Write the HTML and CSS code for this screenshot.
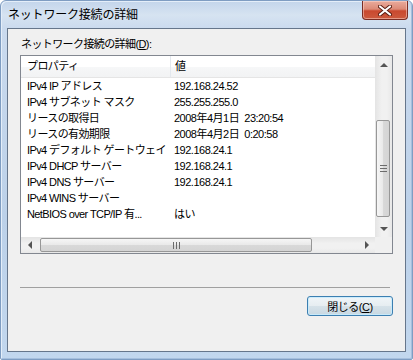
FILE: index.html
```html
<!DOCTYPE html>
<html lang="ja">
<head>
    <meta charset="UTF-8">
    <title>ネットワーク接続の詳細</title>
    <link rel="stylesheet" href="styles.css">
</head>
<body>
    <div class="window">
        <div class="titlebar">
            <span class="title">ネットワーク接続の詳細</span>
            <div class="close">
                <svg width="14" height="11" viewBox="0 0 14 11">
                    <path d="M2 1.5 L12 9.5 M12 1.5 L2 9.5" stroke="#5a1d12" stroke-width="4" stroke-linecap="round"/>
                    <path d="M2 1.5 L12 9.5 M12 1.5 L2 9.5" stroke="#fff" stroke-width="2.2" stroke-linecap="round"/>
                </svg>
            </div>
        </div>

        <div class="client">
            <div class="label">ネットワーク接続の詳細(<u>D</u>):</div>

            <div class="listbox">
                <div class="list">
                    <div class="head">
                        <div class="col-prop">プロパティ</div>
                        <div class="col-val">値</div>
                    </div>
                    <div class="row"><div class="col-prop">IPv4 IP アドレス</div><div class="col-val">192.168.24.52</div></div>
                    <div class="row"><div class="col-prop">IPv4 サブネット マスク</div><div class="col-val">255.255.255.0</div></div>
                    <div class="row"><div class="col-prop">リースの取得日</div><div class="col-val">2008年4月1日 &nbsp;23:20:54</div></div>
                    <div class="row"><div class="col-prop">リースの有効期限</div><div class="col-val">2008年4月2日 &nbsp;0:20:58</div></div>
                    <div class="row"><div class="col-prop">IPv4 デフォルト ゲートウェイ</div><div class="col-val">192.168.24.1</div></div>
                    <div class="row"><div class="col-prop">IPv4 DHCP サーバー</div><div class="col-val">192.168.24.1</div></div>
                    <div class="row"><div class="col-prop">IPv4 DNS サーバー</div><div class="col-val">192.168.24.1</div></div>
                    <div class="row"><div class="col-prop">IPv4 WINS サーバー</div><div class="col-val"></div></div>
                    <div class="row"><div class="col-prop">NetBIOS over TCP/IP 有...</div><div class="col-val">はい</div></div>
                </div>

                <div class="vscroll">
                    <div class="sbtn"><span class="arrow up"></span></div>
                    <div class="vtrack">
                        <div class="vthumb"><span class="grip-h"></span></div>
                    </div>
                    <div class="sbtn"><span class="arrow down"></span></div>
                </div>

                <div class="hscroll">
                    <div class="sbtn"><span class="arrow left"></span></div>
                    <div class="htrack">
                        <div class="hthumb"><span class="grip-v"></span></div>
                    </div>
                    <div class="sbtn"><span class="arrow right"></span></div>
                </div>
                <div class="corner"></div>
            </div>

            <div class="separator"></div>

            <div class="buttons">
                <button class="btn">閉じる(<u>C</u>)</button>
            </div>
        </div>
    </div>
</body>
</html>
```

FILE: styles.css
```css
body {
    margin: 0;
    width: 413px;
    height: 360px;
    overflow: hidden;
    font-family: "Liberation Sans", "Noto Sans CJK JP", sans-serif;
    font-size: 11px;
    color: #000;
    background: #fff;
}
.window {
    box-sizing: border-box;
    width: 413px;
    height: 360px;
    border: 1px solid #7f9dc2;
    border-radius: 6px 6px 2px 2px;
    padding: 0 6px 7px 6px;
    background: linear-gradient(to bottom, #c3d5eb 0, #d6e3f1 14px, #cadaee 28px, #bcd1e9 60%, #c2d7ee 100%);
    box-shadow: inset 1px 1px 0 #e4eef9, inset -1px -1px 0 #a6bfdd;
}
.titlebar {
    height: 27px;
    display: flex;
    justify-content: space-between;
    align-items: flex-start;
}
.title {
    font-size: 12px;
    line-height: 28px;
    padding-left: 1px;
    letter-spacing: -0.2px;
}
.close {
    width: 44px;
    height: 18px;
    margin-right: -2px;
    border: 1px solid #7a2d24;
    border-top: none;
    border-radius: 0 0 4px 4px;
    background: linear-gradient(to bottom, #e9ab9c 0, #dc8a77 45%, #c9492f 55%, #cc5a3e 100%);
    box-shadow: inset 0 0 0 1px rgba(255, 220, 210, 0.5);
    display: flex;
    align-items: center;
    justify-content: center;
}
.client {
    box-sizing: border-box;
    height: 324px;
    border: 1px solid #66768b;
    background: #f0f0f0;
    padding: 7px 12px 0 12px;
}
.label {
    line-height: 16px;
    padding-left: 1px;
    margin-bottom: 3px;
    letter-spacing: -0.6px;
}
.listbox {
    width: 373px;
    height: 199px;
    box-sizing: border-box;
    border: 1px solid #828790;
    background: #fff;
    display: grid;
    grid-template-columns: 354px 17px;
    grid-template-rows: 181px 16px;
}
.list {
    overflow: hidden;
}
.head {
    display: flex;
    height: 21px;
    border-bottom: 1px solid #e5e5e5;
    background: linear-gradient(to bottom, #fff 0, #fff 50%, #f6f7f8 51%, #f2f3f4 100%);
    line-height: 21px;
}
.head .col-prop {
    border-right: 1px solid #e3e8ee;
}
.row {
    display: flex;
    height: 16px;
    line-height: 16px;
}
.col-prop {
    width: 143px;
    padding-left: 6px;
    white-space: nowrap;
    letter-spacing: -0.6px;
}
.col-val {
    padding-left: 4px;
    white-space: nowrap;
    letter-spacing: -0.5px;
}
.vscroll {
    display: flex;
    flex-direction: column;
    background: linear-gradient(to right, #e4e4e4, #f1f1f1 40%, #f1f1f1 70%, #e8e8e8);
}
.hscroll {
    display: flex;
    background: linear-gradient(to bottom, #e4e4e4, #f1f1f1 40%, #f1f1f1 70%, #e8e8e8);
}
.sbtn {
    width: 17px;
    height: 17px;
    flex: none;
    display: flex;
    align-items: center;
    justify-content: center;
}
.hscroll .sbtn {
    height: 16px;
}
.vtrack {
    flex: 1;
}
.vthumb {
    margin: 47px 2px 0 1px;
    height: 95px;
    border: 1px solid #979797;
    border-radius: 2px;
    background: linear-gradient(to right, #f6f6f6, #e9e9e9 50%, #d9d9d9 51%, #d4d4d4);
    display: flex;
    align-items: center;
    justify-content: center;
}
.htrack {
    flex: 1;
}
.hthumb {
    margin: 1px 0 0 2px;
    width: 270px;
    height: 12px;
    border: 1px solid #979797;
    border-radius: 2px;
    background: linear-gradient(to bottom, #f6f6f6, #e9e9e9 50%, #d9d9d9 51%, #d4d4d4);
    display: flex;
    align-items: center;
    justify-content: center;
}
.grip-h {
    width: 7px;
    height: 5px;
    border-top: 1px solid #6c6c6c;
    border-bottom: 1px solid #6c6c6c;
    background: linear-gradient(to bottom, transparent 2px, #6c6c6c 2px, #6c6c6c 3px, transparent 3px);
}
.grip-v {
    width: 5px;
    height: 7px;
    border-left: 1px solid #6c6c6c;
    border-right: 1px solid #6c6c6c;
    background: linear-gradient(to right, transparent 2px, #6c6c6c 2px, #6c6c6c 3px, transparent 3px);
}
.corner {
    background: #f0f0f0;
}
.arrow {
    width: 0;
    height: 0;
    border: 4px solid transparent;
}
.arrow.up {
    border-top: none;
    border-bottom: 4px solid #555;
}
.arrow.down {
    border-bottom: none;
    border-top: 4px solid #555;
}
.arrow.left {
    border-left: none;
    border-right: 4px solid #555;
}
.arrow.right {
    border-right: none;
    border-left: 4px solid #555;
}
.separator {
    margin: 33px 3px 0 0;
    height: 1px;
    background: #a0a0a0;
}
.buttons {
    display: flex;
    justify-content: flex-end;
    padding-top: 8px;
}
.btn {
    width: 86px;
    height: 20px;
    padding: 0;
    border: 1px solid #3c7fb1;
    border-radius: 3px;
    background: linear-gradient(to bottom, #f0f5f8 0, #e6edf1 50%, #d6e2e9 51%, #c8d8e2 100%);
    box-shadow: inset 0 0 0 1px rgba(200, 235, 252, 0.9);
    font-family: "Liberation Sans", "Noto Sans CJK JP", sans-serif;
    font-size: 11px;
    color: #000;
    letter-spacing: -0.5px;
}
```
